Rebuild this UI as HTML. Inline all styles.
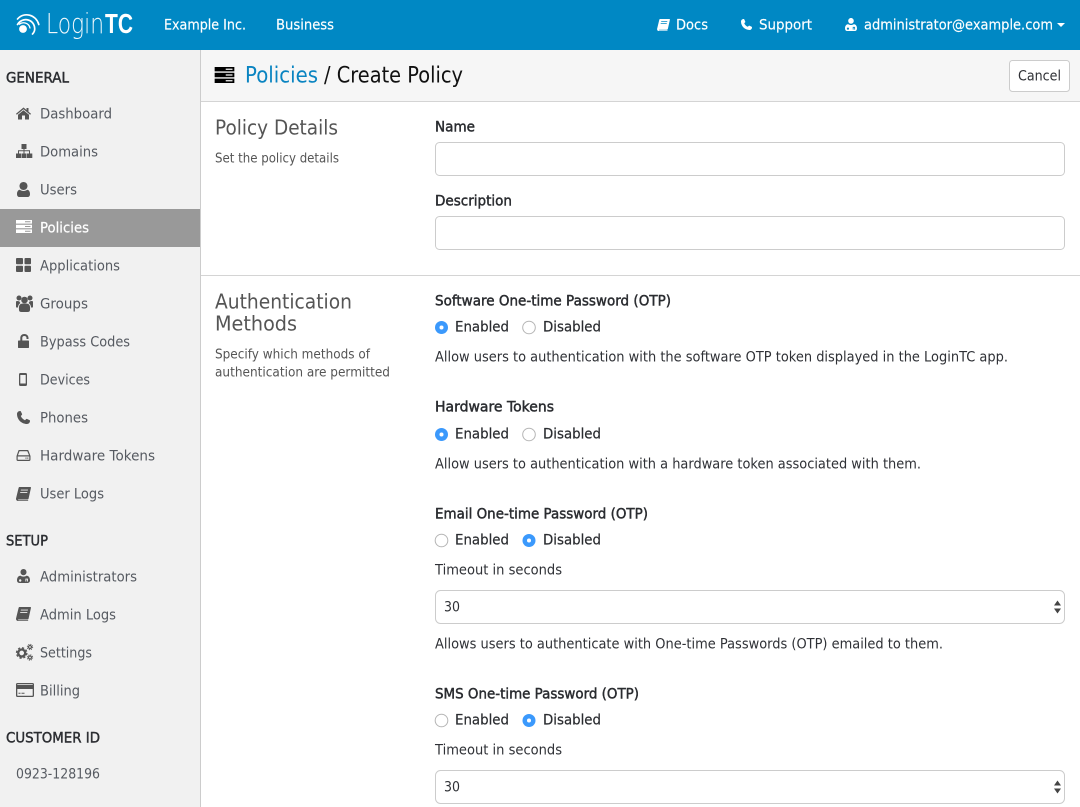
<!DOCTYPE html>
<html><head><meta charset="utf-8"><title>Create Policy</title>
<style>
html,body{margin:0;padding:0;background:#fff;width:1080px;height:807px;overflow:hidden}
svg{display:block}
text{font-family:"DejaVu Sans","Liberation Sans",sans-serif;font-size:14px;white-space:pre;transform:translateY(-.5px)}
.n{fill:#565a61}
.h{fill:#fff;font-size:14px;stroke:#fff;stroke-width:.15}
.g{fill:#2b2d31;font-size:14px;stroke:#2b2d31;stroke-width:.45}
.b{fill:#2f3136;font-size:14px}
.l{fill:#2a2c30;font-size:14px;stroke:#2a2c30;stroke-width:.45}
.s{fill:#555;font-size:13px}
.t{fill:#555;font-size:20px}
.i{fill:#555}
</style></head><body>
<svg width="1080" height="807" viewBox="0 0 1080 807" xmlns="http://www.w3.org/2000/svg">
<defs>
<symbol id="server" viewBox="0 0 16 13"><path fill-rule="evenodd" d="M0 0H16V3.6H0ZM9 1.3V2.3H14.500V1.300ZM0 4.700H16V8.300H0ZM9 6V7H14.500V6ZM0 9.400H16V13H0ZM9 10.700V11.700H14.500V10.700Z"/></symbol>
<symbol id="book" viewBox="0 0 15 14"><path fill-rule="evenodd" d="M3.600 0H14.200C14.900 0 15.100 .5 14.900 1.100L12.600 11.500C12.400 12.200 12 12.500 11.200 12.500H2.700C2.100 12.500 1.800 12.900 2.300 13.200H12.300L12 14H2C.7 14 0 13 0 11.800 0 11.500 .1 11.100 .2 10.800L2.600 .9C2.800 .3 3.100 0 3.600 0ZM4.900 2.600 4.700 3.500H11.800L12 2.600ZM4.300 5 4.100 5.900H11.200L11.400 5Z"/></symbol>
<symbol id="md" viewBox="0 0 13 14"><path fill-rule="evenodd" d="M6.500 0C8.200 0 9.500 1.400 9.500 3.100S8.200 6.200 6.500 6.200 3.500 4.800 3.500 3.100 4.800 0 6.500 0ZM3.300 6.600C4.200 7.200 5.300 7.600 6.500 7.600S8.800 7.200 9.700 6.600C11.900 7 13 8.800 13 11.300 13 13 12 14 10.600 14H2.400C1 14 0 13 0 11.300 0 8.800 1.100 7 3.300 6.600ZM3.200 10.300A1.200 1.200 0 1 0 3.210 10.300ZM8.400 9.600H10.900V12.500H10V10.500H9.300V12.500H8.400Z"/></symbol>
<symbol id="phone" viewBox="0 0 13 13"><path d="M3 0C3.500 0 3.800 .2 4 .7L5 2.900C5.200 3.300 5.100 3.700 4.800 4L3.800 5C4.500 6.800 6.200 8.500 8 9.200L9 8.200C9.300 7.900 9.700 7.800 10.100 8L12.300 9C12.800 9.200 13 9.500 13 10 13 11.600 11.600 13 10 13 4.500 13 0 8.500 0 3 0 1.400 1.400 0 3 0Z"/></symbol>
</defs>

<!-- backgrounds -->
<rect x="0" y="50" width="200" height="757" fill="#f1f1f1"/>
<rect x="200" y="50" width="1" height="757" fill="#ccc"/>
<rect x="201" y="50" width="879" height="51" fill="#f6f6f6"/>
<rect x="201" y="101" width="879" height="1" fill="#d4d4d4"/>
<rect x="201" y="275" width="879" height="1" fill="#d4d4d4"/>
<rect x="0" y="0" width="1080" height="50" fill="#0088c4"/>
<rect x="0" y="209" width="200" height="38" fill="#999"/>

<!-- logo -->
<circle cx="23" cy="29" r="3.900" fill="#fff"/>
<path d="M17.500 19C24 11.500 36 14.500 38.800 24.500" fill="none" stroke="#fff" stroke-width="1.700" stroke-linecap="round"/>
<path d="M17.500 24.500C22 17 33 18.500 34.500 27 35.200 30 34 32.500 32.500 34" fill="none" stroke="#fff" stroke-width="1.700" stroke-linecap="round"/>
<path d="M19.300 24.200C23 21.300 29 23 30 28" fill="none" stroke="#fff" stroke-width="1.300" stroke-linecap="round"/>
<text x="46" y="33.500" textLength="58" lengthAdjust="spacingAndGlyphs" style="font-family:'DejaVu Sans ExtraLight','DejaVu Sans Light','Liberation Sans',sans-serif;font-size:28px;fill:#fff" opacity=".95">Login</text>
<text x="105" y="33.500" textLength="28" lengthAdjust="spacingAndGlyphs" style="font-family:'Liberation Sans',sans-serif;font-size:28px;fill:#fff;font-weight:bold">TC</text>

<!-- top nav -->
<text class="h" x="164" y="30" textLength="82" lengthAdjust="spacingAndGlyphs">Example Inc.</text>
<text class="h" x="276" y="30" textLength="58" lengthAdjust="spacingAndGlyphs">Business</text>
<use href="#book" x="657" y="19" width="13" height="12" fill="#fff"/>
<text class="h" x="676" y="30" textLength="32" lengthAdjust="spacingAndGlyphs">Docs</text>
<use href="#phone" x="741" y="19" width="11" height="11" fill="#fff"/>
<text class="h" x="759" y="30" textLength="53" lengthAdjust="spacingAndGlyphs">Support</text>
<use href="#md" x="845" y="18" width="12" height="13" fill="#fff"/>
<text class="h" x="864" y="30" textLength="189" lengthAdjust="spacingAndGlyphs">administrator@example.com</text>
<path d="M1057 23H1065L1061 27Z" fill="#fff"/>

<!-- sidebar headings -->
<text class="g" x="6" y="83" textLength="63" lengthAdjust="spacingAndGlyphs">GENERAL</text>
<text class="g" x="6" y="546" textLength="42" lengthAdjust="spacingAndGlyphs">SETUP</text>
<text class="g" x="6" y="743" textLength="94" lengthAdjust="spacingAndGlyphs">CUSTOMER ID</text>

<!-- sidebar items -->
<text class="n" x="40" y="119" textLength="72" lengthAdjust="spacingAndGlyphs">Dashboard</text>
<text class="n" x="40" y="157" textLength="58" lengthAdjust="spacingAndGlyphs">Domains</text>
<text class="n" x="40" y="195" textLength="37" lengthAdjust="spacingAndGlyphs">Users</text>
<text x="40" y="233" textLength="49" lengthAdjust="spacingAndGlyphs" fill="#fff" stroke="#fff" stroke-width=".2">Policies</text>
<text class="n" x="40" y="271" textLength="80" lengthAdjust="spacingAndGlyphs">Applications</text>
<text class="n" x="40" y="309" textLength="48" lengthAdjust="spacingAndGlyphs">Groups</text>
<text class="n" x="40" y="347" textLength="90" lengthAdjust="spacingAndGlyphs">Bypass Codes</text>
<text class="n" x="40" y="385" textLength="50" lengthAdjust="spacingAndGlyphs">Devices</text>
<text class="n" x="40" y="423" textLength="48" lengthAdjust="spacingAndGlyphs">Phones</text>
<text class="n" x="40" y="461" textLength="115" lengthAdjust="spacingAndGlyphs">Hardware Tokens</text>
<text class="n" x="40" y="499" textLength="64" lengthAdjust="spacingAndGlyphs">User Logs</text>
<text class="n" x="40" y="582" textLength="97" lengthAdjust="spacingAndGlyphs">Administrators</text>
<text class="n" x="40" y="620" textLength="76" lengthAdjust="spacingAndGlyphs">Admin Logs</text>
<text class="n" x="40" y="658" textLength="52" lengthAdjust="spacingAndGlyphs">Settings</text>
<text class="n" x="40" y="696" textLength="40" lengthAdjust="spacingAndGlyphs">Billing</text>
<text class="n" x="16" y="779" textLength="84" lengthAdjust="spacingAndGlyphs">0923-128196</text>

<!-- sidebar icons -->
<path class="i" d="M23.500 107.500 16 113.800 16.800 114.700 23.500 109.200 30.200 114.700 31 113.800 28.500 111.700V108H26.500V110L23.500 107.500ZM23.500 110.300 18 114.800V119.500H22V115.500H25V119.500H29V114.800Z"/>
<path class="i" d="M21.500 144H26.500V149H24.500V150.300H30V153.500H32.300V158H27V153.500H29V151.300H24.500V153.500H26.500V158H21.500V153.500H23.500V151.300H19V153.500H21V158H16V153.500H18V150.300H23.500V149H21.500Z"/>
<path class="i" d="M23.500 182C25.800 182 27.500 183.800 27.500 186S25.800 190 23.500 190 19.500 188.200 19.500 186 21.200 182 23.500 182ZM19.800 189.800C20.800 190.600 22 191 23.500 191S26.200 190.600 27.200 189.800C29 190 30 191.800 30 194 30 196 29 197 27.500 197H19.500C18 197 17 196 17 194 17 191.800 18 190 19.800 189.800Z"/>
<use href="#server" x="16" y="220" width="16" height="13" fill="#fff"/>
<path class="i" d="M17 258H22C22.600 258 23 258.400 23 259V263.200C23 263.800 22.600 264.200 22 264.200H17C16.400 264.200 16 263.800 16 263.200V259C16 258.400 16.400 258 17 258ZM25.500 258H30C30.600 258 31 258.400 31 259V263.200C31 263.800 30.600 264.200 30 264.200H25.500C24.900 264.200 24.500 263.800 24.500 263.200V259C24.500 258.400 24.900 258 25.500 258ZM17 265.800H22C22.600 265.800 23 266.200 23 266.800V271C23 271.600 22.600 272 22 272H17C16.400 272 16 271.600 16 271V266.800C16 266.200 16.400 265.800 17 265.800ZM25.500 265.800H30C30.600 265.800 31 266.200 31 266.800V271C31 271.600 30.600 272 30 272H25.500C24.900 272 24.500 271.600 24.500 271V266.800C24.500 266.200 24.900 265.800 25.500 265.800Z"/>
<g class="i"><circle cx="24.500" cy="300" r="3.300"/><circle cx="19" cy="298" r="2.500"/><circle cx="30" cy="298" r="2.500"/><path d="M20 304.500C20.800 303.700 22 303.500 24.500 303.500S28.200 303.700 29 304.500C30 305.500 30.300 307.500 30 310 29.800 311.500 29 312 27.500 312H21.500C20 312 19.200 311.500 19 310 18.700 307.500 19 305.500 20 304.500Z"/><path d="M16 301.500C16.800 300.800 18 301 19.500 301.500 19.800 302.300 20 302.800 20.500 303 18.800 304 18 305.500 18 307.500H16.500C16 307.500 16 307 16 306ZM33 301.500C32.200 300.800 31 301 29.500 301.500 29.200 302.300 29 302.800 28.500 303 30.200 304 31 305.500 31 307.500H32.500C33 307.500 33 307 33 306Z"/></g>
<path class="i" fill-rule="evenodd" d="M18 340.500H20.300V338C20.300 335.500 22 334 24.300 334 26.700 334 28.500 335.600 28.500 338V339H26.500V338C26.500 336.800 25.600 336 24.300 336 23 336 22.300 336.800 22.300 338V340.500H28.200C28.700 340.500 29 340.800 29 341.300V347.200C29 347.700 28.700 348 28.200 348H18.800C18.300 348 18 347.700 18 347.200V341.300C18 340.800 18.300 340.500 18.800 340.500Z"/>
<path class="i" fill-rule="evenodd" d="M20.500 373H25.500C26.500 373 27 373.500 27 374.500V384.500C27 385.500 26.500 386 25.500 386H20.500C19.500 386 19 385.500 19 384.500V374.500C19 373.500 19.500 373 20.500 373ZM20.300 375V383.500H25.700V375Z"/>
<use href="#phone" x="17" y="411" width="13" height="13" fill="#555"/>
<path class="i" fill-rule="evenodd" d="M19 450H27.500C28 450 28.300 450.200 28.500 450.700L30.500 456V459.500C30.500 460.500 30 461 29 461H18C17 461 16.500 460.500 16.500 459.500V456L18.500 450.300C18.600 450.100 18.800 450 19 450ZM19.500 451.200 18 455.300H29L27.300 451.200ZM17.700 456.500V459.800H29.300V456.500ZM25.500 457.500H26.500V458.700H25.500ZM27.300 457.500H28.300V458.700H27.300Z"/>
<use href="#book" x="16" y="487" width="15" height="14" fill="#555"/>
<use href="#md" x="17" y="569" width="13" height="14" fill="#555"/>
<use href="#book" x="16" y="607" width="15" height="14" fill="#555"/>
<g fill="none" stroke="#555"><circle cx="21.700" cy="653" r="3.500" stroke-width="2.300"/><circle cx="21.700" cy="653" r="5.200" stroke-width="1.300" stroke-dasharray="2.300 1.800"/><circle cx="30" cy="647" r="1.500" stroke-width="1.200"/><circle cx="30" cy="647" r="2.700" stroke-width=".9" stroke-dasharray="1.100 1.020"/><circle cx="30" cy="657.500" r="1.500" stroke-width="1.200"/><circle cx="30" cy="657.500" r="2.700" stroke-width=".9" stroke-dasharray="1.100 1.020"/></g>
<path class="i" fill-rule="evenodd" d="M17.500 683H32.500C33.500 683 34 683.500 34 684.500V695.500C34 696.500 33.500 697 32.500 697H17.500C16.500 697 16 696.500 16 695.500V684.500C16 683.500 16.500 683 17.500 683ZM17.300 684.200V685H32.700V684.200ZM17.300 689V695.300C17.300 695.600 17.500 695.800 17.800 695.800H32.200C32.500 695.800 32.700 695.600 32.700 695.300V689ZM18.500 692.800H20.500V693.800H18.500ZM21.500 692.800H24.500V693.800H21.500Z"/>

<!-- title bar -->
<use href="#server" x="214" y="67" width="21" height="16" fill="#000" preserveAspectRatio="none"/>
<text x="245" y="83" textLength="73" lengthAdjust="spacingAndGlyphs" style="font-size:22px" fill="#0a84c1">Policies</text>
<text x="324" y="83" textLength="139" lengthAdjust="spacingAndGlyphs" style="font-size:22px" fill="#111">/ Create Policy</text>
<rect x="1009.500" y="60.500" width="60" height="31" rx="3" fill="#fff" stroke="#ccc"/>
<text class="b" x="1018" y="81" textLength="43" lengthAdjust="spacingAndGlyphs">Cancel</text>

<!-- policy details -->
<text class="t" x="215" y="135" textLength="123" lengthAdjust="spacingAndGlyphs">Policy Details</text>
<text class="s" x="215" y="163" textLength="124" lengthAdjust="spacingAndGlyphs">Set the policy details</text>
<text class="l" x="435" y="132" textLength="40" lengthAdjust="spacingAndGlyphs">Name</text>
<rect x="435.500" y="142.500" width="629" height="33" rx="4" fill="#fff" stroke="#ccc"/>
<text class="l" x="435" y="206" textLength="77" lengthAdjust="spacingAndGlyphs">Description</text>
<rect x="435.500" y="216.500" width="629" height="33" rx="4" fill="#fff" stroke="#ccc"/>

<!-- auth methods -->
<text class="t" x="215" y="309" textLength="137" lengthAdjust="spacingAndGlyphs">Authentication</text>
<text class="t" x="215" y="331" textLength="82" lengthAdjust="spacingAndGlyphs">Methods</text>
<text class="s" x="215" y="359" textLength="155" lengthAdjust="spacingAndGlyphs">Specify which methods of</text>
<text class="s" x="215" y="377" textLength="175" lengthAdjust="spacingAndGlyphs">authentication are permitted</text>

<text class="l" x="435" y="306" textLength="236" lengthAdjust="spacingAndGlyphs">Software One-time Password (OTP)</text>
<circle cx="441.500" cy="327.500" r="6.500" fill="#3b99fc"/><circle cx="441.500" cy="327.500" r="2" fill="#fff"/>
<text class="l" x="455" y="332" textLength="54" lengthAdjust="spacingAndGlyphs" style="stroke-width:.2">Enabled</text>
<circle cx="529" cy="327.500" r="6.300" fill="#fff" stroke="#b5b5b5"/>
<text class="l" x="543" y="332" textLength="58" lengthAdjust="spacingAndGlyphs" style="stroke-width:.2">Disabled</text>
<text class="b" x="435" y="362" textLength="573" lengthAdjust="spacingAndGlyphs">Allow users to authentication with the software OTP token displayed in the LoginTC app.</text>

<text class="l" x="435" y="412" textLength="119" lengthAdjust="spacingAndGlyphs">Hardware Tokens</text>
<circle cx="441.500" cy="434.500" r="6.500" fill="#3b99fc"/><circle cx="441.500" cy="434.500" r="2" fill="#fff"/>
<text class="l" x="455" y="439" textLength="54" lengthAdjust="spacingAndGlyphs" style="stroke-width:.2">Enabled</text>
<circle cx="529" cy="434.500" r="6.300" fill="#fff" stroke="#b5b5b5"/>
<text class="l" x="543" y="439" textLength="58" lengthAdjust="spacingAndGlyphs" style="stroke-width:.2">Disabled</text>
<text class="b" x="435" y="469" textLength="486" lengthAdjust="spacingAndGlyphs">Allow users to authentication with a hardware token associated with them.</text>

<text class="l" x="435" y="519" textLength="213" lengthAdjust="spacingAndGlyphs">Email One-time Password (OTP)</text>
<circle cx="441.500" cy="540.500" r="6.300" fill="#fff" stroke="#b5b5b5"/>
<text class="l" x="455" y="545" textLength="54" lengthAdjust="spacingAndGlyphs" style="stroke-width:.2">Enabled</text>
<circle cx="529" cy="540.500" r="6.500" fill="#3b99fc"/><circle cx="529" cy="540.500" r="2" fill="#fff"/>
<text class="l" x="543" y="545" textLength="58" lengthAdjust="spacingAndGlyphs" style="stroke-width:.2">Disabled</text>
<text class="b" x="435" y="575" textLength="127" lengthAdjust="spacingAndGlyphs">Timeout in seconds</text>
<rect x="435.500" y="590.500" width="629" height="33" rx="5" fill="#fff" stroke="#ccc"/>
<text class="b" x="444" y="612" textLength="16" lengthAdjust="spacingAndGlyphs">30</text>
<path d="M1054 605.500 1057.500 600.500 1061 605.500ZM1054 608.500H1061L1057.500 613.500Z" fill="#444"/>
<text class="b" x="435" y="649" textLength="508" lengthAdjust="spacingAndGlyphs">Allows users to authenticate with One-time Passwords (OTP) emailed to them.</text>

<text class="l" x="435" y="699" textLength="204" lengthAdjust="spacingAndGlyphs">SMS One-time Password (OTP)</text>
<circle cx="441.500" cy="720.500" r="6.300" fill="#fff" stroke="#b5b5b5"/>
<text class="l" x="455" y="725" textLength="54" lengthAdjust="spacingAndGlyphs" style="stroke-width:.2">Enabled</text>
<circle cx="529" cy="720.500" r="6.500" fill="#3b99fc"/><circle cx="529" cy="720.500" r="2" fill="#fff"/>
<text class="l" x="543" y="725" textLength="58" lengthAdjust="spacingAndGlyphs" style="stroke-width:.2">Disabled</text>
<text class="b" x="435" y="755" textLength="127" lengthAdjust="spacingAndGlyphs">Timeout in seconds</text>
<rect x="435.500" y="770.500" width="629" height="33" rx="5" fill="#fff" stroke="#ccc"/>
<text class="b" x="444" y="792" textLength="16" lengthAdjust="spacingAndGlyphs">30</text>
<path d="M1054 785.500 1057.500 780.500 1061 785.500ZM1054 788.500H1061L1057.500 793.500Z" fill="#444"/>
</svg>
</body></html>
